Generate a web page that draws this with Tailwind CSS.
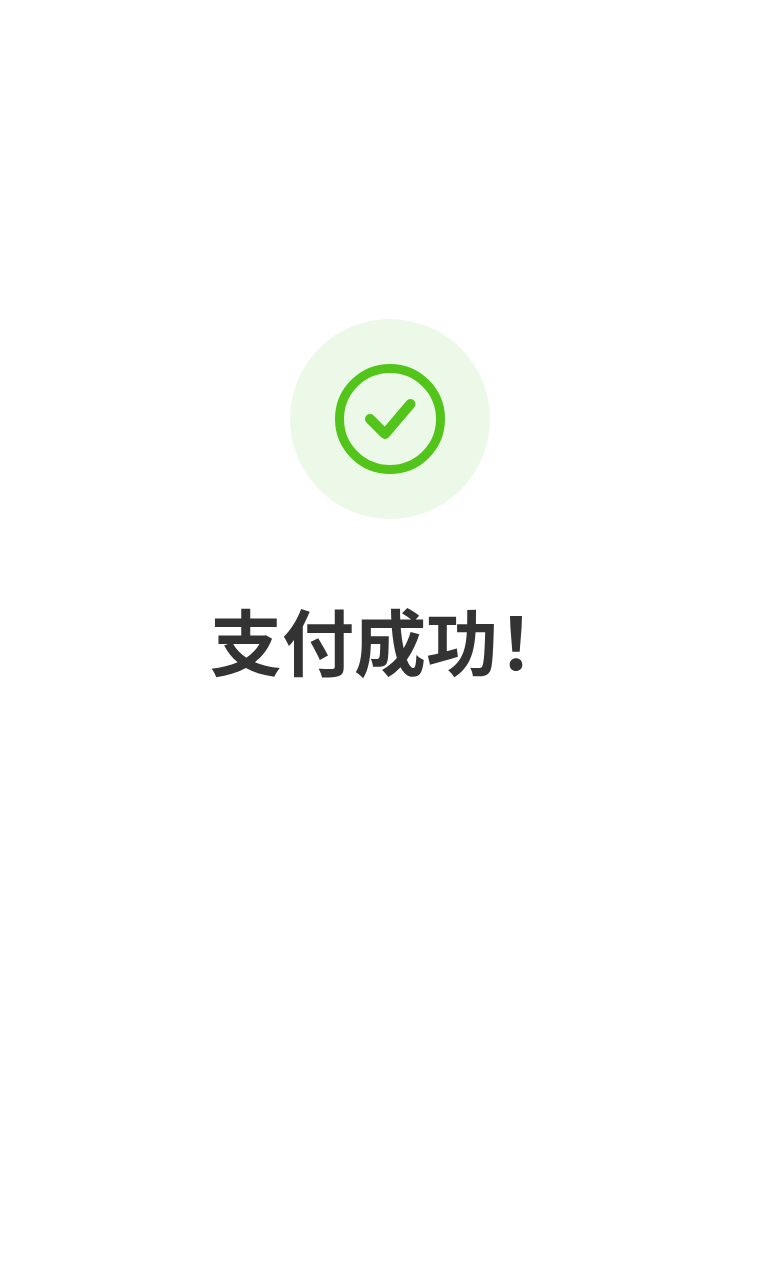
<!DOCTYPE html>
<html lang="zh">
<head>
    <meta charset="UTF-8">
    <meta name="viewport" content="width=device-width, initial-scale=1.0">
    <script src="https://cdn.jsdelivr.net/npm/@tailwindcss/browser@4"></script>
    <title>支付成功</title>
</head>
<body class="bg-white h-[1280px] overflow-hidden font-['Noto_Sans_CJK_SC',sans-serif]">
    <div class="flex flex-col items-center pt-[319px]">
        <div class="w-[200px] h-[200px] rounded-full bg-[#ecf9e8] flex items-center justify-center">
            <svg width="110" height="110" viewBox="0 0 110 110" fill="none" stroke="#52c41a">
                <circle cx="55" cy="55" r="50.5" stroke-width="9"/>
                <path d="M35 55 L50 70 L75.5 40" stroke-width="10" stroke-linecap="round" stroke-linejoin="round"/>
            </svg>
        </div>
        <h1 class="mt-[68px] text-[72px] leading-[104px] font-bold text-[#333333]">支付成功！</h1>
    </div>
</body>
</html>
